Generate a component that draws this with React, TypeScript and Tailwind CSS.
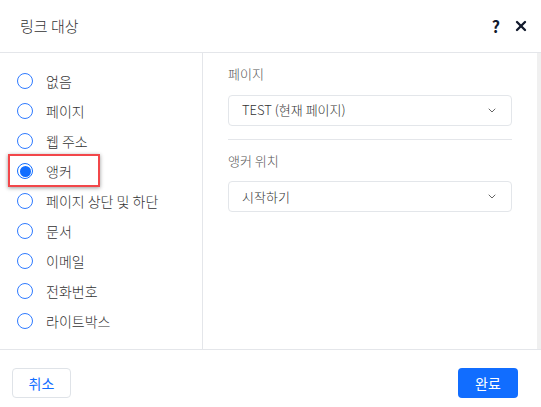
import { X } from "lucide-react";

const options = [
  "없음",
  "페이지",
  "웹 주소",
  "앵커",
  "페이지 상단 및 하단",
  "문서",
  "이메일",
  "전화번호",
  "라이트박스",
];

const Chevron = () => (
  <svg width="8" height="5" viewBox="0 0 8 5" fill="none" className="text-[#666]">
    <path d="M1 1l3 3 3-3" stroke="currentColor" strokeWidth="1" strokeLinecap="round" />
  </svg>
);

const Select = ({ value }: { value: string }) => (
  <div className="flex h-[31px] items-center justify-between rounded border border-[#e3e6ea] pl-[13px] pr-[15px] text-[13px] font-light text-[#333]">
    <span>{value}</span>
    <Chevron />
  </div>
);

const App = () => {
  const selected = "앵커";
  return (
    <div
      className="flex h-[407px] w-[541px] flex-col bg-white"
      style={{ fontFamily: '"Noto Sans CJK KR", "Liberation Sans", sans-serif' }}
    >
      {/* 헤더 */}
      <div className="flex h-[53px] shrink-0 items-center justify-between border-b border-[#e4e6ea] pl-[20px] pr-[12px]">
        <span className="text-[15px] font-light text-[#333]">링크 대상</span>
        <div className="flex items-center gap-[13px] text-[#121a2c]">
          <span className="text-[16px] font-bold leading-none">?</span>
          <X className="h-[16px] w-[16px]" strokeWidth={3.5} />
        </div>
      </div>

      {/* 본문 */}
      <div className="flex h-[297px] shrink-0 border-b border-[#e4e6ea]">
        <div className="w-[203px] shrink-0 border-r border-[#e4e6ea] pt-[13px]">
          {options.map((o) => (
            <div key={o} className="relative flex h-[30px] items-center pl-[17px]">
              {o === selected ? (
                <span className="flex h-[16px] w-[16px] items-center justify-center rounded-full border-[1.5px] border-[#116dff] bg-white">
                  <span className="h-[11px] w-[11px] rounded-full bg-[#116dff]" />
                </span>
              ) : (
                <span className="h-[16px] w-[16px] rounded-full border-[1.5px] border-[#2f7bff] bg-white" />
              )}
              <span className="ml-[13px] text-[14px] font-light text-[#333]">{o}</span>
              {o === selected && (
                <div className="absolute left-[8px] top-[-2px] h-[33px] w-[92px] border-2 border-[#f2474a] shadow-[0_1px_4px_rgba(0,0,0,0.4)]" />
              )}
            </div>
          ))}
        </div>

        <div className="flex-1 px-[25px] pt-[11px]">
          <div className="text-[13px] font-light text-[#555]">페이지</div>
          <div className="mt-[11px]">
            <Select value="TEST (현재 페이지)" />
          </div>
          <div className="mt-[13px] border-t border-[#e4e6ea]" />
          <div className="mt-[11px] text-[13px] font-light text-[#555]">앵커 위치</div>
          <div className="mt-[11px]">
            <Select value="시작하기" />
          </div>
        </div>

        <div className="w-[4px] shrink-0 bg-[#f0f0f0]" />
      </div>

      {/* 푸터 */}
      <div className="flex flex-1 items-start justify-between px-[12px] pt-[18px] pr-[23px]">
        <button className="h-[30px] w-[59px] rounded border border-[#dfe3e8] text-[14px] text-[#116dff]">
          취소
        </button>
        <button className="h-[30px] w-[60px] rounded bg-[#116dff] text-[14px] text-white">
          완료
        </button>
      </div>
    </div>
  );
};

export default App;
